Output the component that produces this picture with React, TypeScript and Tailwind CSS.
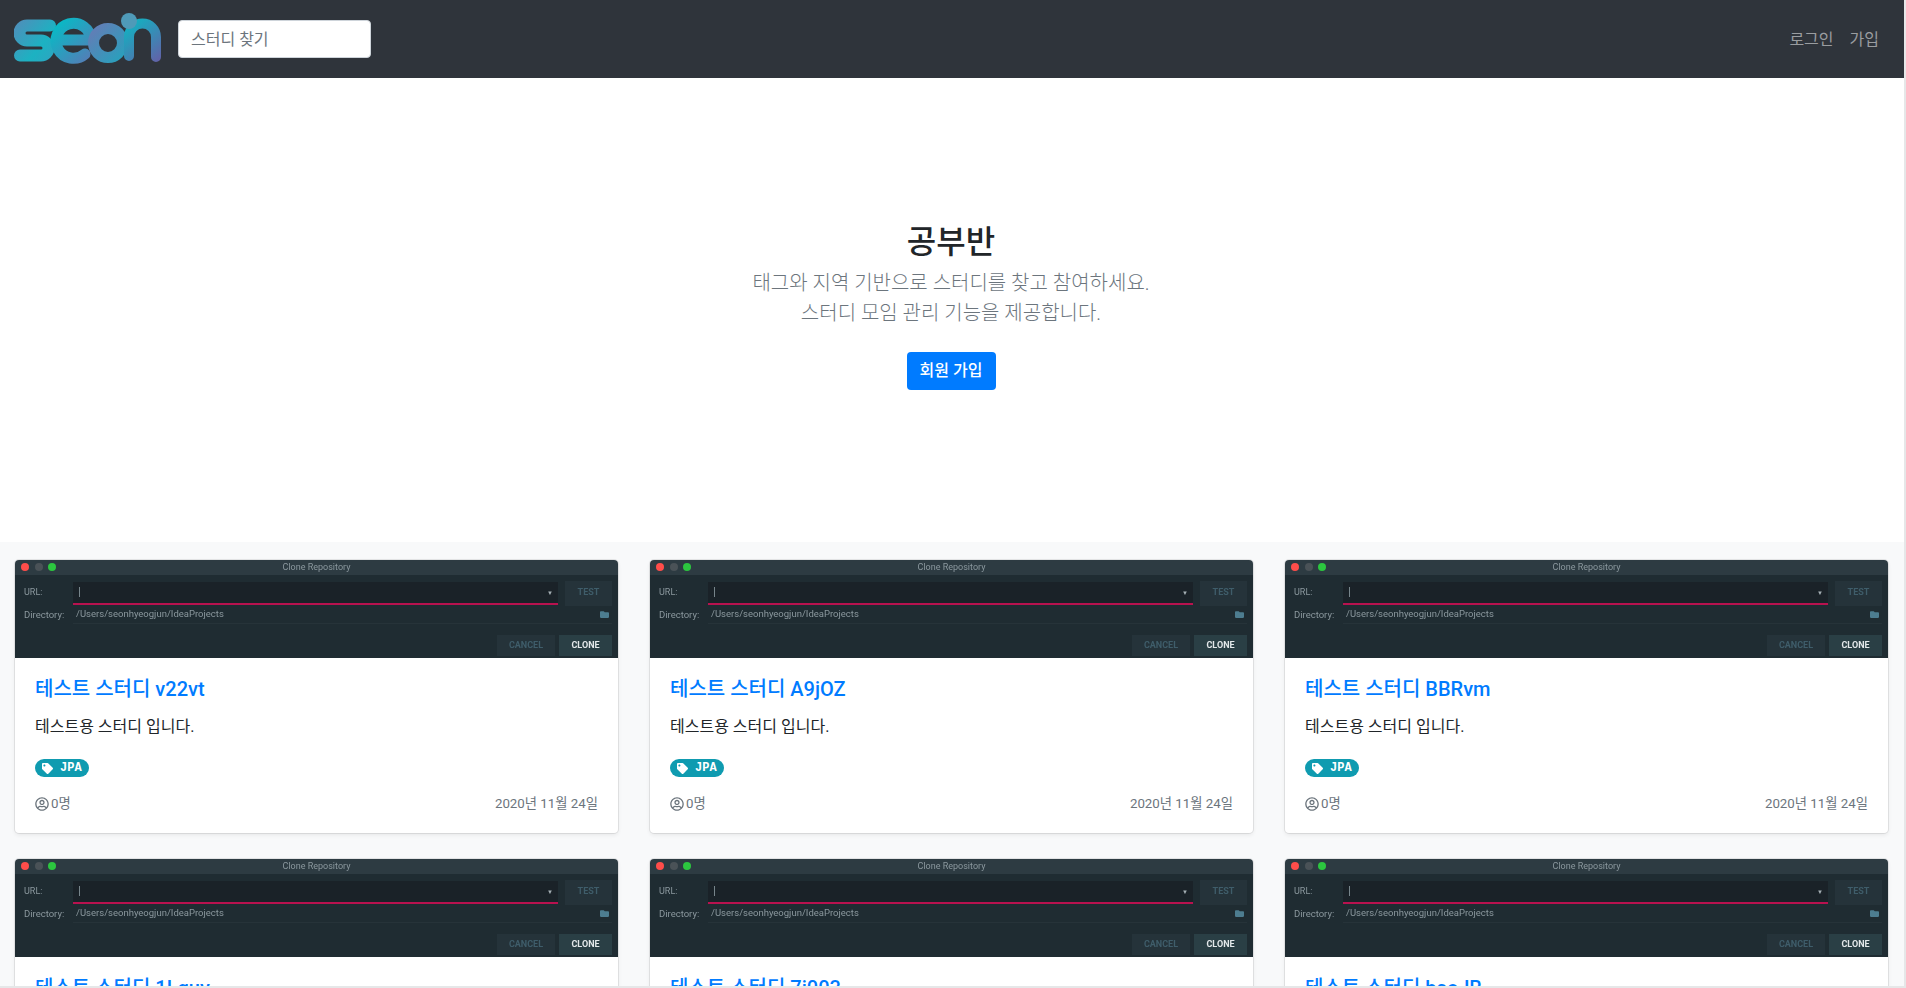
import { FaFolder, FaRegUserCircle, FaTag } from 'react-icons/fa'

const STUDIES = ['v22vt', 'A9jOZ', 'BBRvm', '1Lguv', '7i003', 'bsoJB']

function Logo() {
  return (
    <svg width="150" height="56" viewBox="0 0 150 56" className="shrink-0" aria-label="seon">
      <defs>
        <linearGradient id="seonA" gradientUnits="userSpaceOnUse" x1="0" y1="0" x2="60" y2="50">
          <stop offset="0" stopColor="#5b86b8" />
          <stop offset="0.55" stopColor="#1cb2c2" />
          <stop offset="1" stopColor="#3d9ac0" />
        </linearGradient>
        <linearGradient id="seonB" gradientUnits="userSpaceOnUse" x1="45" y1="8" x2="85" y2="50">
          <stop offset="0" stopColor="#05bcc6" />
          <stop offset="1" stopColor="#5f74b4" />
        </linearGradient>
        <linearGradient id="seonC" gradientUnits="userSpaceOnUse" x1="90" y1="10" x2="130" y2="50">
          <stop offset="0" stopColor="#5f7fb6" />
          <stop offset="1" stopColor="#12aebf" />
        </linearGradient>
        <linearGradient id="seonD" gradientUnits="userSpaceOnUse" x1="115" y1="10" x2="150" y2="52">
          <stop offset="0" stopColor="#0fb4c2" />
          <stop offset="1" stopColor="#6a5aa6" />
        </linearGradient>
      </defs>
      <path d="M36 14.5H13a7.5 7.5 0 0 0 0 15H27a7.5 7.5 0 0 1 0 15H6" fill="none" stroke="url(#seonA)" strokeWidth="12" strokeLinecap="round" />
      <path d="M43 29H77A17.5 17.5 0 1 0 71 43" fill="none" stroke="url(#seonB)" strokeWidth="11" strokeLinecap="round" />
      <circle cx="94" cy="32" r="14.5" fill="none" stroke="url(#seonC)" strokeWidth="11" />
      <path d="M115 45V26a13.5 13.5 0 0 1 27 0V46" fill="none" stroke="url(#seonD)" strokeWidth="10" strokeLinecap="round" />
      <circle cx="115" cy="10" r="8" fill="#4f9ab8" />
    </svg>
  )
}

function NavBar() {
  return (
    <nav className="flex h-[78px] shrink-0 items-center bg-[#2f343b] pr-[25px] pl-[14px]">
      <Logo />
      <input
        placeholder="스터디 찾기"
        className="ml-[14px] h-[38px] w-[193px] rounded border border-[#ced4da] bg-white px-[12px] text-[16px] placeholder:text-[#6c757d]"
      />
      <div className="mt-[2px] ml-auto flex items-center gap-[16px] text-[16px] text-[#9a9da0]">
        <a>로그인</a>
        <a>가입</a>
      </div>
    </nav>
  )
}

function Hero() {
  return (
    <section className="flex h-[464px] shrink-0 flex-col items-center bg-white pt-[142px] pr-[2px] text-center">
      <h2 className="text-[32px] leading-[44px] font-medium text-[#212529]">공부반</h2>
      <p className="mt-[4px] text-[20px] leading-[30px] font-light text-[#6c757d]">
        태그와 지역 기반으로 스터디를 찾고 참여하세요.
        <br />
        스터디 모임 관리 기능을 제공합니다.
      </p>
      <button className="mt-[24px] h-[38px] w-[89px] rounded bg-[#007bff] text-[16px] font-medium text-white">
        회원 가입
      </button>
    </section>
  )
}

// the study cover: a blurry screenshot of the IDE's clone dialog
function CloneDialog() {
  return (
    <div className="flex h-[98px] flex-col bg-[#1f2c32] font-['Roboto',sans-serif] blur-[0.5px]">
      <div className="relative flex h-[15px] shrink-0 items-center justify-center bg-[#2d3b42] text-[9px] text-[#8b989e]">
        <div className="absolute top-[3px] left-[6px] flex gap-[5.5px]">
          <span className="h-[8px] w-[8px] rounded-full bg-[#ff4d4a]" />
          <span className="h-[8px] w-[8px] rounded-full bg-[#4a5257]" />
          <span className="h-[8px] w-[8px] rounded-full bg-[#2cc63f]" />
        </div>
        Clone Repository
      </div>
      <div className="mt-[5px] flex h-[26px] items-center pr-[6px] pl-[9px] text-[9px] text-[#8b989e]">
        <span className="w-[49px]">URL:</span>
        <div className="flex h-[23px] flex-1 items-center justify-between border-b-2 border-[#b8124f] bg-[#1a2228] pr-[5px] pl-[6px]">
          <span className="h-[10px] w-px bg-[#77858b]" />
          <span className="text-[6px] text-[#a5b0b5]">▼</span>
        </div>
        <div className="ml-[7px] flex h-[25px] w-[47px] items-center justify-center bg-[#25333a] text-[9px] font-bold text-[#3f5d6a]">
          TEST
        </div>
      </div>
      <div className="flex h-[18px] items-center pr-[6px] pl-[9px] text-[9.5px] text-[#8b989e]">
        <span className="w-[49px] shrink-0">Directory:</span>
        <div className="flex h-[18px] flex-1 items-center justify-between border-b border-[#263339] pr-[3px] pl-[3px]">
          <span>/Users/seonhyeogjun/IdeaProjects</span>
          <FaFolder className="h-[9px] w-[9px] text-[#4d7d90]" />
        </div>
      </div>
      <div className="mt-[11px] flex justify-end gap-[4px] pr-[6px] text-[9px] font-bold">
        <div className="flex h-[21px] w-[58px] items-center justify-center bg-[#25333a] text-[#3f5d6a]">CANCEL</div>
        <div className="flex h-[21px] w-[53px] items-center justify-center bg-[#2a3f45] text-[#e3e8ea]">CLONE</div>
      </div>
    </div>
  )
}

function StudyCard({ name }: { name: string }) {
  return (
    <article className="overflow-hidden rounded bg-white shadow-[0_0_0_1px_rgba(0,0,0,0.08),0_2px_4px_rgba(0,0,0,0.075)]">
      <CloneDialog />
      <div className="px-[20px] pt-[19px] pb-[19px]">
        <h5 className="text-[20px] leading-[24px] font-medium text-[#007bff]">테스트 스터디 {name}</h5>
        <p className="mt-[14px] text-[16px] leading-[24px] text-[#212529]">테스트용 스터디 입니다.</p>
        <div className="mt-[20px] flex">
          <span className="flex h-[18px] w-[54px] items-center gap-[7px] rounded-full bg-[#0f9bb0] pl-[7px] font-['Liberation_Mono',monospace] text-[12px] font-bold text-white">
            <FaTag className="h-[11px] w-[11px]" />
            JPA
          </span>
        </div>
        <div className="mt-[16px] flex items-center justify-between text-[13.3px] leading-[21px] text-[#6c757d]">
          <span className="flex items-center gap-[2px]">
            <FaRegUserCircle className="h-[14px] w-[14px]" />
            0명
          </span>
          <span>2020년 11월 24일</span>
        </div>
      </div>
    </article>
  )
}

export default function App() {
  return (
    <div className="h-[988px] w-[1906px] overflow-hidden border-r-2 border-b-2 border-[#e6e7e8] font-['Roboto','Noto_Sans_CJK_KR',sans-serif]">
      <div className="flex h-full flex-col overflow-hidden">
        <NavBar />
        <Hero />
        <main className="grid flex-1 grid-cols-3 content-start gap-x-[32px] gap-y-[26px] bg-[#f8f9fa] pt-[18px] pr-[16px] pl-[15px]">
          {STUDIES.map((name) => (
            <StudyCard key={name} name={name} />
          ))}
        </main>
      </div>
    </div>
  )
}
